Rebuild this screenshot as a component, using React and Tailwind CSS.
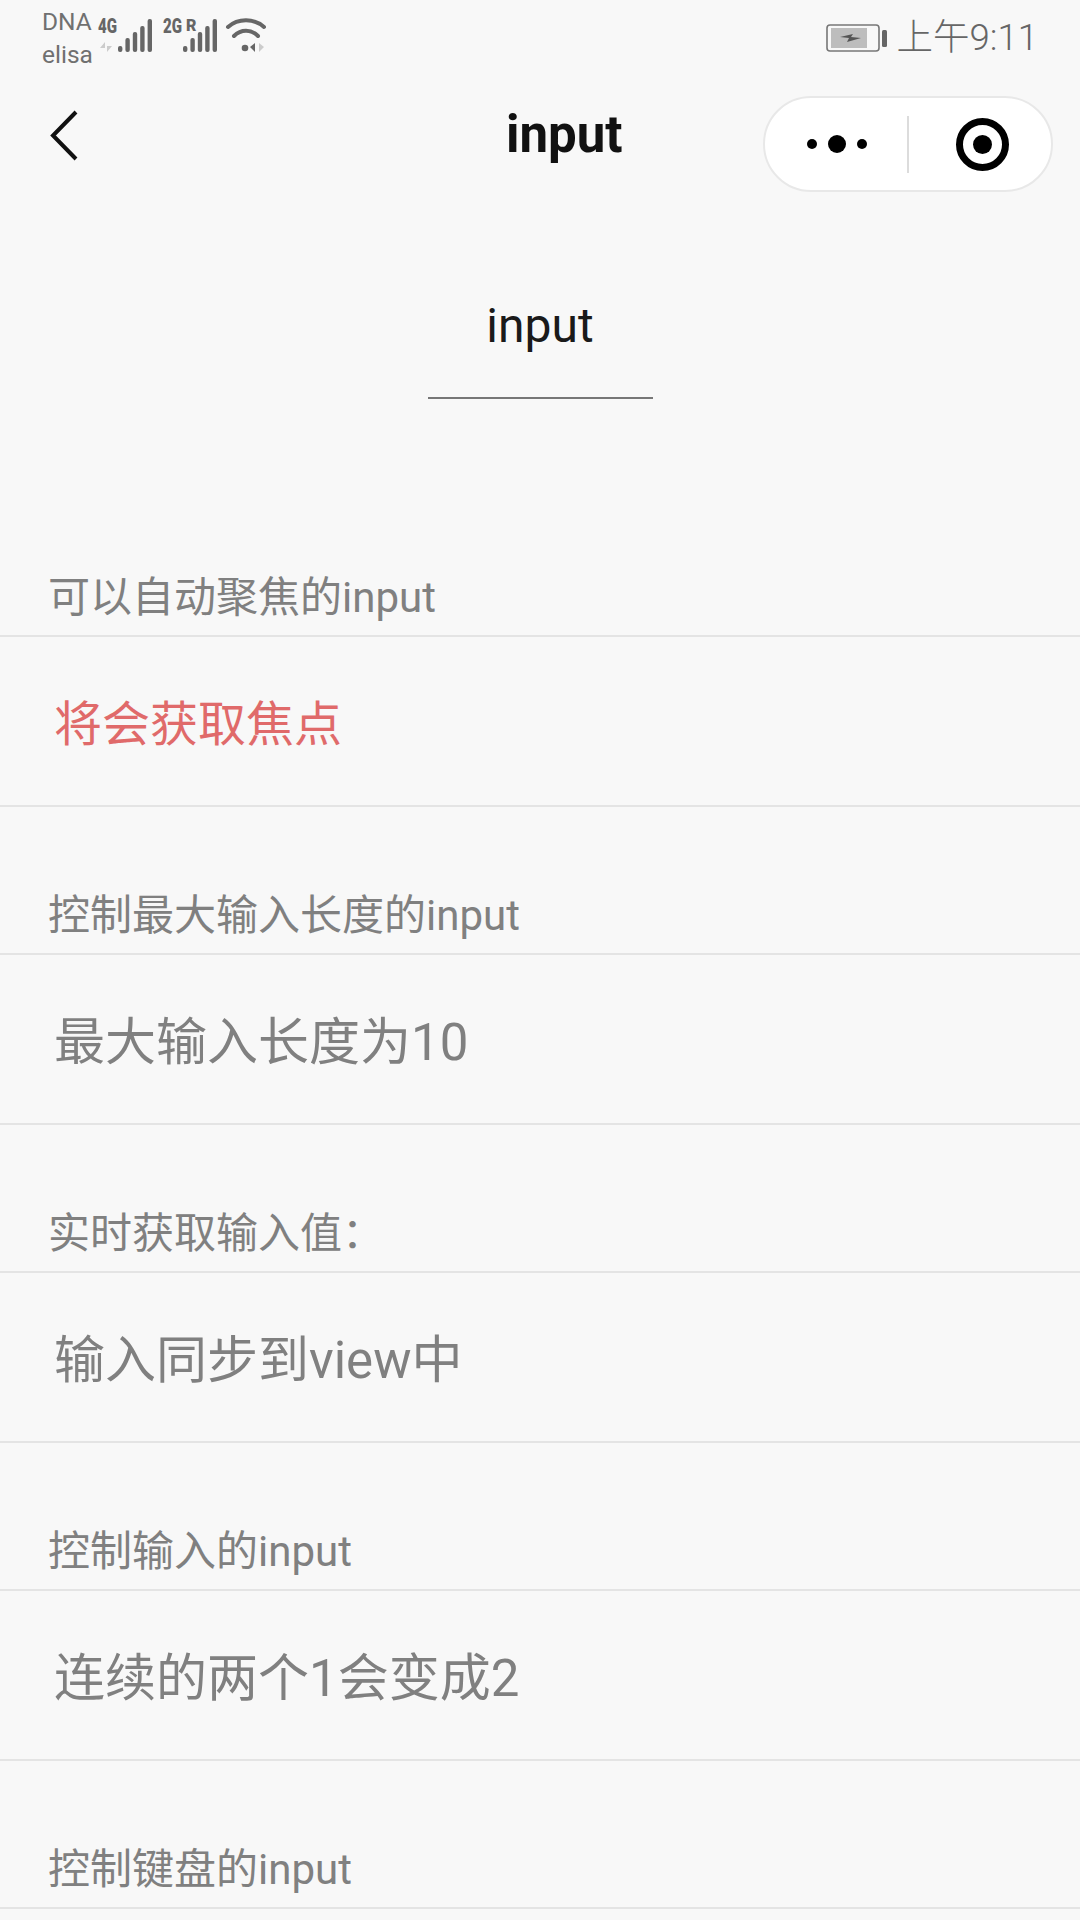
const FONT = "font-['Roboto','Noto_Sans_CJK_SC',sans-serif]";

function Bars({ x }) {
  const heights = [6, 14, 20, 26, 33];
  return heights.map((h, i) => (
    <rect key={i} x={x + i * 7.4} y={37 - h} width="4.4" height={h} rx="2" fill="#666" />
  ));
}

function SignalIcons() {
  return (
    <svg width="180" height="50" viewBox="0 0 180 50" className="ml-[2px] mt-[15px]">
      <text x="2" y="18" fontFamily="Roboto" fontWeight="900" fontSize="20" fill="#666" textLength="19" lengthAdjust="spacingAndGlyphs">4G</text>
      <path d="M9 37v-10l-5 6h5zM11 27v10l5-6h-5z" fill="#ccc" />
      <Bars x={22} />
      <text x="67" y="18" fontFamily="Roboto" fontWeight="900" fontSize="20" fill="#666" textLength="19" lengthAdjust="spacingAndGlyphs">2G</text>
      <text x="90" y="16" fontFamily="Roboto" fontWeight="900" fontSize="16" fill="#666">R</text>
      <Bars x={87} />
      <g fill="none" stroke="#666" strokeWidth="4" strokeLinecap="round">
        <path d="M132 12C142 3 158 3 168 12" />
        <path d="M138 21C145 14 155 14 162 21" />
      </g>
      <circle cx="149" cy="33" r="3.3" fill="#666" />
      <path d="M159 28v9l-5-5z" fill="#666" />
      <path d="M163 28v9l5-5z" fill="#ccc" />
    </svg>
  );
}

function StatusBar() {
  return (
    <div className="flex h-[64px] items-start">
      <div className="ml-[42px] mt-[5px] w-[52px] text-[24.5px] leading-[33px] text-[#707070]">
        <div>DNA</div>
        <div>elisa</div>
      </div>
      <SignalIcons />
      <div className="mt-[18px] mr-[42px] ml-auto flex items-center">
        <svg width="62" height="30" viewBox="0 0 62 30">
          <rect x="1" y="2" width="52" height="26" rx="3" fill="none" stroke="#777" strokeWidth="1.6" />
          <rect x="5" y="5" width="36" height="20" fill="#bdbdbd" />
          <path d="M14 14l13-3-2 3 10 1-14 4 2-4z" fill="#555" />
          <rect x="56" y="7" width="5" height="17" rx="1.5" fill="#666" />
        </svg>
        <span className="ml-[9px] text-[36.5px] leading-[40px] font-light text-[#666]">上午9:11</span>
      </div>
    </div>
  );
}

function NavBar() {
  return (
    <div className="relative mt-[32px] flex h-[96px] items-center">
      <svg width="30" height="54" viewBox="0 0 30 54" className="mb-[16px] ml-[49px]">
        <path d="M27 3L4 26.5 27 50" fill="none" stroke="#111" strokeWidth="4" />
      </svg>
      <div className="absolute top-[9px] left-[506px] text-[51px] leading-[60px] font-bold text-[#111]">input</div>
      <div className="mr-[27px] ml-auto flex h-[96px] w-[290px] items-center rounded-full border-2 border-[#e8e8e8] bg-white">
        <div className="ml-[42px] flex w-[60px] items-center justify-between">
          <span className="size-[10px] rounded-full bg-black" />
          <span className="size-[18px] rounded-full bg-black" />
          <span className="size-[10px] rounded-full bg-black" />
        </div>
        <div className="ml-[40px] h-[57px] w-[2px] bg-[#dcdcdc]" />
        <div className="ml-[47px] flex size-[53px] items-center justify-center rounded-full border-[7px] border-black">
          <span className="size-[19px] rounded-full bg-black" />
        </div>
      </div>
    </div>
  );
}

function Section({ label, placeholder, focus }) {
  return (
    <section>
      <div className="flex h-[146px] items-end pb-[9px] pl-[48px] text-[42px] leading-[56px] text-[#808080]">{label}</div>
      <div className={`flex h-[172px] items-center border-y-2 border-[#e4e4e4] pt-[8px] pl-[54px] ${focus ? "text-[48px] text-[#e06a6a]" : "text-[51px] text-[#808080]"}`}>
        {placeholder}
      </div>
    </section>
  );
}

export default function App() {
  return (
    <div className={`h-[1920px] w-[1080px] overflow-hidden bg-[#f8f8f8] ${FONT}`}>
      <StatusBar />
      <NavBar />
      <div className="mt-[106px] flex flex-col items-center">
        <div className="text-[48px] leading-[56px] text-[#1a1a1a]">input</div>
        <div className="mt-[43px] h-[2px] w-[225px] bg-[#777]" />
      </div>
      <div className="mt-[90px]">
        <Section label="可以自动聚焦的input" placeholder="将会获取焦点" focus />
        <Section label="控制最大输入长度的input" placeholder="最大输入长度为10" />
        <Section label="实时获取输入值：" placeholder="输入同步到view中" />
        <Section label="控制输入的input" placeholder="连续的两个1会变成2" />
        <Section label="控制键盘的input" placeholder="" />
      </div>
    </div>
  );
}
